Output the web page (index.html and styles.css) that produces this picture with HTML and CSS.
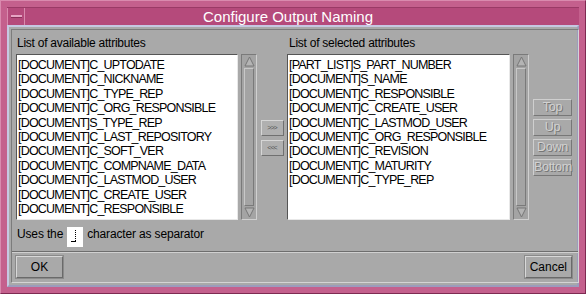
FILE: index.html
```html
<!DOCTYPE html>
<html lang="en">
<head>
    <meta charset="UTF-8">
    <title>Configure Output Naming</title>
    <link rel="stylesheet" href="styles.css">
</head>
<body>
    <div class="frame">
        <div class="titlebar">
            <div class="menu-btn"><span></span></div>
            <div class="title">Configure Output Naming</div>
        </div>
        <div class="client">
            <div class="inner">
                <div class="upper">
                    <div class="labels">
                        <div class="label left-label">List of available attributes</div>
                        <div class="label right-label">List of selected attributes</div>
                    </div>
                    <div class="lists">
                        <div class="listbox left-list">
                            <div>[DOCUMENT]C_UPTODATE</div>
                            <div>[DOCUMENT]C_NICKNAME</div>
                            <div>[DOCUMENT]C_TYPE_REP</div>
                            <div>[DOCUMENT]C_ORG_RESPONSIBLE</div>
                            <div>[DOCUMENT]S_TYPE_REP</div>
                            <div>[DOCUMENT]C_LAST_REPOSITORY</div>
                            <div>[DOCUMENT]C_SOFT_VER</div>
                            <div>[DOCUMENT]C_COMPNAME_DATA</div>
                            <div>[DOCUMENT]C_LASTMOD_USER</div>
                            <div>[DOCUMENT]C_CREATE_USER</div>
                            <div>[DOCUMENT]C_RESPONSIBLE</div>
                        </div>
                        <div class="scrollbar">
                            <svg class="arrow" width="11" height="11" viewBox="0 0 11 11"><path d="M1 10 L5.5 1 L10 10 Z" fill="#b4b4b4" stroke="#777" stroke-width="1"/></svg>
                            <div class="trough"></div>
                            <svg class="arrow" width="11" height="11" viewBox="0 0 11 11"><path d="M1 1 L5.5 10 L10 1 Z" fill="#b4b4b4" stroke="#777" stroke-width="1"/></svg>
                        </div>
                        <div class="movers">
                            <div class="mover">&gt;&gt;&gt;</div>
                            <div class="mover">&lt;&lt;&lt;</div>
                        </div>
                        <div class="listbox right-list">
                            <div>[PART_LIST]S_PART_NUMBER</div>
                            <div>[DOCUMENT]S_NAME</div>
                            <div>[DOCUMENT]C_RESPONSIBLE</div>
                            <div>[DOCUMENT]C_CREATE_USER</div>
                            <div>[DOCUMENT]C_LASTMOD_USER</div>
                            <div>[DOCUMENT]C_ORG_RESPONSIBLE</div>
                            <div>[DOCUMENT]C_REVISION</div>
                            <div>[DOCUMENT]C_MATURITY</div>
                            <div>[DOCUMENT]C_TYPE_REP</div>
                        </div>
                        <div class="scrollbar">
                            <svg class="arrow" width="11" height="11" viewBox="0 0 11 11"><path d="M1 10 L5.5 1 L10 10 Z" fill="#b4b4b4" stroke="#777" stroke-width="1"/></svg>
                            <div class="trough"></div>
                            <svg class="arrow" width="11" height="11" viewBox="0 0 11 11"><path d="M1 1 L5.5 10 L10 1 Z" fill="#b4b4b4" stroke="#777" stroke-width="1"/></svg>
                        </div>
                        <div class="order">
                            <div class="order-btn">Top</div>
                            <div class="order-btn">Up</div>
                            <div class="order-btn">Down</div>
                            <div class="order-btn">Bottom</div>
                        </div>
                    </div>
                    <div class="separator-row">
                        <span>Uses the</span>
                        <div class="sep-input"><span class="cursor"></span></div>
                        <span>character as separator</span>
                    </div>
                </div>
                <div class="actions">
                    <button class="btn">OK</button>
                    <button class="btn">Cancel</button>
                </div>
            </div>
        </div>
    </div>
</body>
</html>
```

FILE: styles.css
```css
body {
    margin: 0;
    padding: 0;
    font-family: "Liberation Sans", Arial, sans-serif;
    font-size: 12px;
    color: #000;
    background: #c45e8c;
}
.frame {
    width: 586px;
    height: 294px;
    box-sizing: border-box;
    background: #c4608d;
    border-top: 1px solid #d98aae;
    border-left: 1px solid #d98aae;
    border-right: 1px solid #7e2a52;
    border-bottom: 1px solid #7e2a52;
    padding: 6px 6px 6px 6px;
    display: flex;
    flex-direction: column;
}
.titlebar {
    height: 18px;
    display: flex;
    background: #b54a7b;
    border-top: 1px solid #9a3a66;
    box-sizing: border-box;
}
.menu-btn {
    width: 18px;
    height: 17px;
    box-sizing: border-box;
    border-right: 1px solid #d98aae;
    border-left: 1px solid #d98aae;
    display: flex;
    align-items: center;
    justify-content: center;
}
.menu-btn span {
    width: 11px;
    height: 2px;
    background: #e6a5c4;
    border-bottom: 1px solid #8a2f59;
}
.title {
    flex: 1;
    text-align: center;
    color: #fff;
    font-size: 15px;
    line-height: 17px;
    padding-right: 28px;
}
.client {
    flex: 1;
    border: 2px solid #c6c8e2;
    border-right-color: #9c9cbc;
    border-bottom-color: #9c9cbc;
    background: #a9a9a9;
    padding: 2px;
    display: flex;
}
.inner {
    flex: 1;
    border: 1px solid #7c7c7c;
    border-right-color: #d4d4d4;
    border-bottom-color: #d4d4d4;
    display: flex;
    flex-direction: column;
}
.upper {
    padding: 5px 4px 3px 4px;
    border-bottom: 1px solid #6e6e6e;
    box-shadow: 0 1px 0 #d0d0d0;
}
.labels {
    display: flex;
    height: 19px;
}
.label {
    line-height: 16px;
    font-size: 12px;
    letter-spacing: -0.25px;
}
.left-label {
    width: 272px;
    padding-left: 1px;
}
.lists {
    display: flex;
    height: 166px;
}
.listbox {
    background: #fff;
    border: 1px solid #555;
    border-right-color: #e8e8e8;
    border-bottom-color: #e8e8e8;
    box-sizing: border-box;
    padding: 3px 2px 2px 1px;
    font-size: 12.5px;
    letter-spacing: -0.8px;
    line-height: 14.4px;
    white-space: nowrap;
    overflow: hidden;
}
.left-list {
    width: 222px;
}
.right-list {
    width: 223px;
}
.scrollbar {
    width: 16px;
    margin-left: 3px;
    box-sizing: border-box;
    border: 1px solid #7a7a7a;
    border-right-color: #d0d0d0;
    border-bottom-color: #d0d0d0;
    display: flex;
    flex-direction: column;
    align-items: center;
    padding: 1px 0;
    background: #a4a4a4;
}
.arrow {
    display: block;
}
.trough {
    flex: 1;
    width: 10px;
    box-sizing: border-box;
    border: 1px solid #c8c8c8;
    border-right-color: #7a7a7a;
    border-bottom-color: #7a7a7a;
    margin: 1px 0;
}
.movers {
    width: 30px;
    display: flex;
    flex-direction: column;
    align-items: center;
    justify-content: center;
    gap: 4px;
    padding-top: 1px;
}
.mover {
    width: 23px;
    height: 16px;
    box-sizing: border-box;
    border: 1px solid #d6d6d6;
    border-right-color: #707070;
    border-bottom-color: #707070;
    background: #b0b0b0;
    font-size: 7px;
    line-height: 14px;
    text-align: center;
    color: #555;
    letter-spacing: -1px;
}
.order {
    width: 43px;
    display: flex;
    flex-direction: column;
    align-items: flex-end;
    justify-content: center;
    gap: 3px;
    padding-right: 2px;
}
.order-btn {
    width: 39px;
    height: 17px;
    box-sizing: border-box;
    border: 1px solid #cfcfcf;
    border-right-color: #777;
    border-bottom-color: #777;
    background: #a9a9a9;
    text-align: center;
    line-height: 15px;
    font-size: 12.5px;
    letter-spacing: -0.3px;
    color: #d2d2d2;
    text-shadow: 1px 1px 0 #767676;
}
.separator-row {
    display: flex;
    align-items: center;
    gap: 4px;
    height: 28px;
    padding-left: 1px;
    letter-spacing: -0.15px;
}
.sep-input {
    width: 16px;
    height: 20px;
    background: #fff;
    position: relative;
    margin-top: 6px;
}
.cursor {
    position: absolute;
    left: 4px;
    top: 3px;
    width: 5px;
    height: 11px;
    border-bottom: 1px solid #000;
}
.cursor::after {
    content: "";
    position: absolute;
    left: 4px;
    top: 0;
    height: 11px;
    border-left: 1px dotted #000;
}
.actions {
    flex: 1;
    display: flex;
    justify-content: space-between;
    align-items: center;
    padding: 0 6px 0 4px;
}
.btn {
    font-family: "Liberation Sans", Arial, sans-serif;
    font-size: 12px;
    background: #a9a9a9;
    border: 1px solid #d8d8d8;
    border-right-color: #6a6a6a;
    border-bottom-color: #6a6a6a;
    box-shadow: 0 0 0 1px #8a8a8a;
    height: 22px;
    padding: 0 4px;
    color: #000;
}
.btn:first-child {
    width: 47px;
}
```
